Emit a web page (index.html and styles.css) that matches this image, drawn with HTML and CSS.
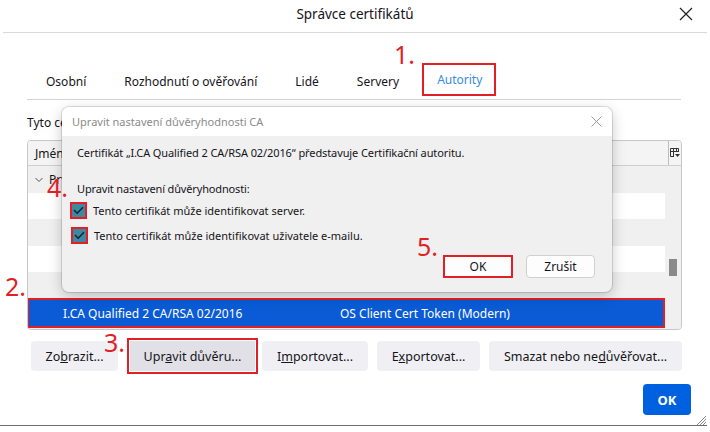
FILE: index.html
```html
<!DOCTYPE html>
<html lang="cs">
<head>
<meta charset="utf-8">
<title>Správce certifikátů</title>
<link rel="stylesheet" href="styles.css">
</head>
<body>
<div class="window">
  <header class="titlebar">
    <span class="title">Správce certifikátů</span>
    <span class="close"><svg width="14" height="14" viewBox="0 0 14 14"><path d="M1 1L13 13M13 1L1 13" stroke="#222" stroke-width="1.2" fill="none"/></svg></span>
  </header>
  <nav class="tabs">
    <span class="tab">Osobní</span>
    <span class="tab">Rozhodnutí o ověřování</span>
    <span class="tab">Lidé</span>
    <span class="tab">Servery</span>
    <span class="tab active marked">Autority</span>
  </nav>
  <p class="desc">Tyto certifikáty identifikují tyto certifikační autority:</p>
  <div class="table">
    <div class="thead">
      <span class="col1">Jméno certifikátu</span>
      <span class="col2">Bezpečnostní zařízení</span>
      <span class="picker"><svg width="10" height="11" viewBox="0 0 10 11"><path d="M0.5 0.5H8.5V4M0.5 0.5V8.5H4M0.5 3.5H8.5M3.5 0.5V8.5M6.5 0.5V4" stroke="#333" fill="none"/><path d="M5 6H10L7.5 9Z" fill="#333"/></svg></span>
    </div>
    <div class="tbody">
      <div class="rows">
        <div class="row group"><span class="twisty"><svg width="8" height="6" viewBox="0 0 8 6"><path d="M0.5 1L4 4.5L7.5 1" stroke="#555" fill="none"/></svg></span><span>První certifikační autorita, a.s.</span></div>
        <div class="row light"></div>
        <div class="row tall"></div>
        <div class="row light"></div>
        <div class="row"></div>
        <div class="row selected"><span class="c1">I.CA Qualified 2 CA/RSA 02/2016</span><span class="c2">OS Client Cert Token (Modern)</span></div>
      </div>
      <div class="scrollbar"><div class="thumb"></div></div>
    </div>
  </div>
  <div class="actions">
    <button class="btn b-view">Zo<u>b</u>razit...</button>
    <button class="btn b-edit marked">Upr<u>a</u>vit důvěru...</button>
    <button class="btn b-import">I<u>m</u>portovat...</button>
    <button class="btn b-export">E<u>x</u>portovat...</button>
    <button class="btn b-delete">Smazat nebo ne<u>d</u>ůvěřovat...</button>
  </div>
  <div class="footer">
    <button class="primary">OK</button>
    <span class="grip"><svg width="10" height="10" viewBox="0 0 10 10"><path d="M10 1L1 10M10 4L4 10M10 7L7 10" stroke="#888" stroke-width="1"/></svg></span>
  </div>
</div>

<div class="dialog">
  <div class="dlg-title">
    <span>Upravit nastavení důvěryhodnosti CA</span>
    <svg width="11" height="11" viewBox="0 0 11 11"><path d="M0.5 0.5L10.5 10.5M10.5 0.5L0.5 10.5" stroke="#9a9a9a" stroke-width="1" fill="none"/></svg>
  </div>
  <div class="dlg-body">
    <p class="dlg-text">Certifikát „I.CA Qualified 2 CA/RSA 02/2016“ představuje Certifikační autoritu.</p>
    <p class="dlg-label">Upravit nastavení důvěryhodnosti:</p>
    <label class="check"><span class="box"><svg width="11" height="9" viewBox="0 0 11 9"><path d="M1 4L4.2 7.2L10 1.2" stroke="#10243a" stroke-width="1.6" fill="none"/></svg></span>Tento certifikát může identifikovat server.</label>
    <label class="check"><span class="box"><svg width="11" height="9" viewBox="0 0 11 9"><path d="M1 4L4.2 7.2L10 1.2" stroke="#10243a" stroke-width="1.6" fill="none"/></svg></span>Tento certifikát může identifikovat uživatele e-mailu.</label>
    <div class="dlg-buttons">
      <button class="dbtn ok">OK</button>
      <button class="dbtn">Zrušit</button>
    </div>
  </div>
</div>

<span class="step s1">1.</span>
<span class="step s2">2.</span>
<span class="step s3">3.</span>
<span class="step s4">4.</span>
<span class="step s5">5.</span>
</body>
</html>
```

FILE: styles.css
```css
* { box-sizing: border-box; }
html, body { margin: 0; padding: 0; background: #fff; }
body {
  width: 710px;
  height: 432px;
  overflow: hidden;
  position: relative;
  font-family: "Noto Sans", "Open Sans", sans-serif;
  font-size: 12px;
  color: #15141a;
}
button { font-family: inherit; }

.window {
  width: 707px;
  height: 426px;
  border-bottom: 1px solid #6e6e6e;
  display: flex;
  flex-direction: column;
}

.titlebar {
  height: 33px;
  border-bottom: 1px solid #d9d9d9;
  margin-left: 3px;
  display: flex;
  align-items: center;
  justify-content: center;
  position: relative;
}
.title { font-size: 13.5px; margin-top: -4px; }
.close { position: absolute; right: 14px; top: 7px; line-height: 0; }

.tabs {
  margin: 30px 26px 0 27px;
  height: 37px;
  border-bottom: 1px solid #d4d4d4;
  display: flex;
  align-items: center;
}
.tab { padding: 0 19px; font-size: 12px; }
.tab.active { color: #3a8be0; }
.tab.marked {
  height: 33px;
  line-height: 33px;
  margin-left: 4px;
  margin-top: -4px;
  padding: 0 14px 0 15px;
  outline: 2px solid #e21f26;
  outline-offset: -2px;
}

.desc { margin: 14px 0 0 27px; font-size: 12px; }

.table {
  margin: 9px 25px 0 27px;
  height: 190px;
  border: 1px solid #c8c8c8;
  border-radius: 4px;
  display: flex;
  flex-direction: column;
  overflow: hidden;
  background: #f0f0f0;
}
.thead {
  height: 25px;
  border-bottom: 1px solid #cfcfcf;
  background: #f4f4f4;
  display: flex;
  align-items: center;
  flex-shrink: 0;
}
.thead .col1 { width: 305px; padding-left: 7px; }
.thead .col2 { flex: 1; }
.picker { width: 13px; height: 100%; border-left: 1px solid #bdbdbd; display: flex; align-items: center; justify-content: center; }
.tbody { flex: 1; display: flex; }
.rows { flex: 1; display: flex; flex-direction: column; }
.row { height: 26px; flex-shrink: 0; display: flex; align-items: center; font-size: 12px; white-space: nowrap; overflow: hidden; }
.row.light { background: #fff; }
.row.tall, .row.group { height: 27px; }
.row.group { padding-left: 7px; gap: 6px; }
.twisty { line-height: 0; }
.row .c1 { width: 304px; padding-left: 35px; }
.row .c2 { flex: 1; }
.row.selected {
  height: 30px;
  background: #0a5bd5;
  color: #fff;
  outline: 2px solid #e21f26;
  outline-offset: -2px;
  margin-left: -1px;
}
.row.selected .c1 { padding-left: 36px; width: 313px; }
.scrollbar { width: 16px; background: #f0f0f0; position: relative; }
.thumb { position: absolute; left: 4px; top: 93px; width: 8px; height: 17px; background: #8a8a8a; }

.actions {
  margin: 11px 0 0 31px;
  display: flex;
  gap: 9px;
}
.btn {
  height: 30px;
  padding: 0;
  border: none;
  border-radius: 4px;
  background: #f0f0f4;
  font-size: 12.5px;
  color: #15141a;
  text-align: center;
}
.b-view { width: 87px; }
.b-edit { width: 125px; }
.b-import { width: 106px; }
.b-export { width: 103px; }
.b-delete { width: 193px; }
.btn.marked {
  background: #e0e0e6;
  border-radius: 0;
  outline: 2px solid #e21f26;
  outline-offset: 1px;
  margin: 0 -2px 0 3px;
}

.footer {
  flex: 1;
  display: flex;
  justify-content: flex-end;
  align-items: flex-start;
  padding: 13px 16px 0 0;
  position: relative;
}
.primary {
  width: 48px;
  height: 31px;
  border: none;
  border-radius: 4px;
  background: #0061e0;
  color: #fff;
  font-weight: bold;
  font-size: 13px;
}
.grip { position: absolute; right: 1px; bottom: 0; line-height: 0; }

.dialog {
  position: absolute;
  left: 62px;
  top: 107px;
  width: 550px;
  height: 185px;
  border-radius: 7px;
  background: #f0f0f0;
  box-shadow: 0 0 0 1px rgba(0,0,0,0.12), 0 4px 14px rgba(0,0,0,0.22);
  overflow: hidden;
  display: flex;
  flex-direction: column;
}
.dlg-title {
  height: 29px;
  background: #fff;
  display: flex;
  align-items: center;
  justify-content: space-between;
  padding: 0 10px 0 10px;
  color: #8b8b8b;
  font-size: 11px;
}
.dlg-body { flex: 1; padding: 8px 17px 0 15px; display: flex; flex-direction: column; font-size: 11px; }
.dlg-text { margin: 0; height: 18px; line-height: 18px; letter-spacing: -0.1px; }
.dlg-label { margin: 18px 0 0; height: 18px; line-height: 18px; letter-spacing: -0.15px; }
.check { display: flex; align-items: center; gap: 6px; height: 25px; margin-left: -7px; }
.check + .check { margin-left: -6px; }
.box {
  width: 17px;
  height: 17px;
  border: 2px solid #e21f26;
  background: #3d8aa0;
  display: flex;
  align-items: center;
  justify-content: center;
}
.dlg-buttons { display: flex; justify-content: flex-end; gap: 13px; margin-top: 7px; }
.dbtn {
  width: 69px;
  height: 23px;
  background: #fdfdfd;
  border: 1px solid #d0d0d0;
  border-radius: 4px;
  font-size: 12px;
  color: #15141a;
}
.dbtn.ok { border: 2px solid #e21f26; border-radius: 0; width: 70px; }

.step {
  position: absolute;
  color: #e21f26;
  font-size: 25px;
  line-height: 1;
  font-family: "Noto Sans", sans-serif;
}
.s1 { left: 394px; top: 42px; }
.s2 { left: 5px; top: 274px; }
.s3 { left: 104px; top: 330px; }
.s4 { left: 47px; top: 175px; }
.s5 { left: 417px; top: 234px; }
```
